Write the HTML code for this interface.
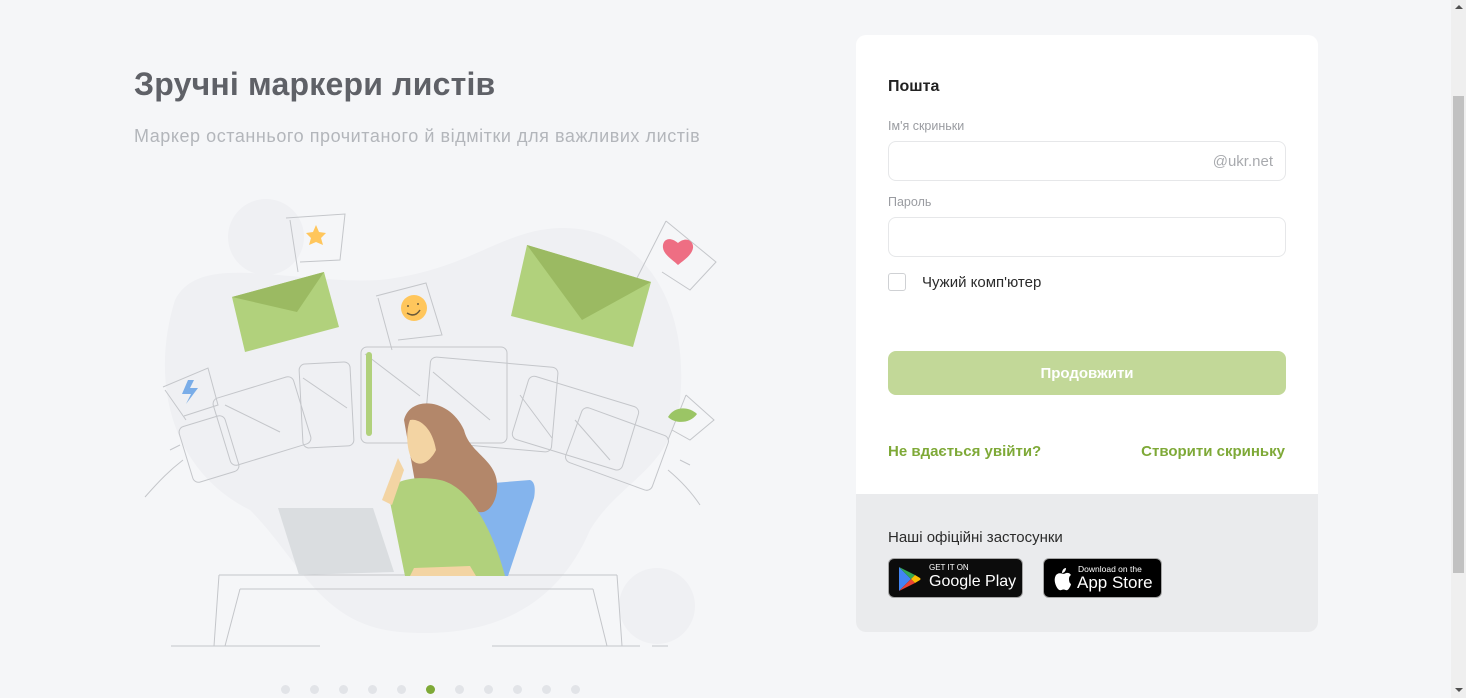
<!DOCTYPE html>
<html><head><meta charset="utf-8"><style>
*{margin:0;padding:0;box-sizing:border-box}
html,body{width:1466px;height:698px;overflow:hidden;background:#f5f6f8;font-family:"Liberation Sans",sans-serif}
.abs{position:absolute}
h1{position:absolute;left:134px;top:66px;font-size:32px;font-weight:bold;color:#5f6167;white-space:nowrap;letter-spacing:0.2px}
.sub{position:absolute;left:134px;top:126px;font-size:18px;color:#b3b6bb;white-space:nowrap;letter-spacing:0.55px}
.card{position:absolute;left:856px;top:35px;width:462px;height:597px;border-radius:10px;background:#fff;overflow:hidden}
.bottom{position:absolute;left:0;top:459px;width:462px;height:138px;background:#eaebed}
.lbl{position:absolute;left:32px;font-size:12.5px;color:#9a9ca1}
.inp{position:absolute;left:32px;width:398px;height:40px;border:1px solid #e6e7e9;border-radius:8px}
.btn{position:absolute;left:32px;top:316px;width:398px;height:44px;border-radius:8px;background:#c2d898;color:#fff;font-weight:bold;font-size:15px;text-align:center;line-height:46px}
.lnk{position:absolute;top:408px;font-size:15px;font-weight:bold;color:#7ea937}
.badge{position:absolute;top:523px;height:40px;background:#0c0c0c;border:1px solid #a6a6a6;border-radius:6px;color:#fff}
.sb{position:absolute;left:1451px;top:0;width:15px;height:698px;background:#efefef}
.dot{position:absolute;top:685px;width:9px;height:9px;border-radius:50%;background:#e2e4e8}
</style></head><body>
<h1>Зручні маркери листів</h1>
<div class="sub">Маркер останнього прочитаного й відмітки для важливих листів</div>

<svg class="abs" style="left:0;top:0" width="850" height="698" viewBox="0 0 850 698">
 <g fill="#eff0f3">
  <path d="M175 300 C200 250 290 285 380 280 C470 270 500 230 560 228 C640 226 690 300 680 400 C672 470 620 480 590 530 C560 600 500 640 400 632 C320 625 300 560 250 510 C170 470 150 380 175 300Z"/>
  <circle cx="266" cy="237" r="38"/>
  <circle cx="657" cy="606" r="38"/>
 </g>
 <g fill="none" stroke="#c4c6ca" stroke-width="1">
  <rect x="301" y="363" width="51" height="84" rx="6" transform="rotate(-3 326 405)"/>
  <rect x="361" y="347" width="146" height="96" rx="6"/>
  <rect x="427" y="362" width="128" height="85" rx="6" transform="rotate(5 491 404)"/>
  <rect x="220" y="386" width="84" height="70" rx="6" transform="rotate(-17 262 421)"/>
  <rect x="185" y="420" width="48" height="58" rx="6" transform="rotate(-17 209 449)"/>
  <rect x="518" y="390" width="115" height="66" rx="6" transform="rotate(17 575 423)"/>
  <rect x="571" y="420" width="92" height="58" rx="6" transform="rotate(20 617 449)"/>
  <path d="M303 378 L347 408 M365 354 L420 396 M433 372 L490 420 M520 395 L552 438 M225 405 L280 432 M575 420 L610 460 M112 0"/>
  <path d="M145 497 C160 480 170 470 183 460 M700 505 C690 490 680 480 668 470 M170 450 L180 445 M680 460 L690 465"/>
  <path d="M286 218 L345 214 L340 260 L300 262 M290 220 L298 272 M376 296 L426 283 L442 335 L398 340 M378 298 L392 350 M163 387 L208 368 L218 405 L184 416 M165 390 L186 420 M666 221 L716 262 L690 290 L662 272 M666 221 L637 278 M686 395 L714 420 L690 440 L672 430 M686 395 L668 440"/>
  <path d="M219 575 L617 575 M219 575 L214 646 M240 589 L593 589 M240 589 L225 646 M593 589 L607 646 M617 575 L622 646 M171 646 L320 646 M492 646 L640 646 M652 646 L668 646"/>
 </g>
 <rect x="366" y="352" width="6" height="84" rx="3" fill="#b1d17c"/>
 <path d="M316 225 l3 7 l7 1 l-5 5 l2 7 l-7 -3 l-7 3 l2 -7 l-5 -5 l7 -1z" fill="#ffc65c"/>
 <circle cx="414" cy="308" r="13" fill="#ffc65c"/>
 <path d="M408 305 v2 M418 303 v2 M407 313 q8 5 13 -3" stroke="#6b5a3a" stroke-width="1.5" fill="none"/>
 <path d="M678 243 c-10 -8 -16 -2 -15 5 c1 7 10 12 15 17 c6 -5 14 -10 15 -17 c1 -7 -7 -12 -15 -5z" fill="#ee6e83"/>
 <path d="M188 380 L182 394 L191 394 L186 404 L198 388 L190 388 L194 380Z" fill="#7aade8"/>
 <path d="M668 417 C675 405 690 407 697 414 C690 424 675 424 668 417Z" fill="#9bc565"/>
 <g>
  <path d="M232 297 L324 272 L339 327 L245 352 Z" fill="#b1d17c"/>
  <path d="M232 297 L324 272 L297 312 Z" fill="#9bba62"/>
  <path d="M527 245 L651 282 L633 347 L511 316 Z" fill="#b1d17c"/>
  <path d="M527 245 L651 282 L582 320 Z" fill="#9bba62"/>
 </g>
 <path d="M481 484 L530 480 C536 482 535 492 534 498 L508 576 L460 576Z" fill="#84b4ed"/>
 <path d="M278 508 L373 508 L394 572 L299 575 Z" fill="#dadde0"/>
 <path d="M404 420 C410 395 450 398 464 430 C470 455 500 460 497 490 C495 510 480 520 470 505 L420 510 Z" fill="#b3876a"/>
 <path d="M410 420 C418 418 432 426 436 450 C430 462 420 468 412 460 C406 448 406 430 410 420Z" fill="#f3d4a3"/>
 <path d="M388 492 C395 478 420 476 440 480 C465 485 490 520 505 576 L405 576 Z" fill="#b1d17c"/>
 <path d="M382 500 L398 458 L404 470 L392 505 Z" fill="#f3d4a3"/>
 <path d="M414 568 L470 566 L476 576 L410 576Z" fill="#f3d4a3"/>
</svg>
<div class="dot" style="left:281px"></div><div class="dot" style="left:310px"></div><div class="dot" style="left:339px"></div><div class="dot" style="left:368px"></div><div class="dot" style="left:397px"></div><div class="dot" style="left:426px;background:#7ea937"></div><div class="dot" style="left:455px"></div><div class="dot" style="left:484px"></div><div class="dot" style="left:513px"></div><div class="dot" style="left:542px"></div><div class="dot" style="left:571px"></div>

<div class="card">
 <div class="abs" style="left:32px;top:43px;font-size:16px;font-weight:bold;color:#222">Пошта</div>
 <div class="lbl" style="top:84px">Ім'я скриньки</div>
 <div class="inp" style="top:106px"><span class="abs" style="right:12px;top:11px;font-size:15px;color:#a8aaae">@ukr.net</span></div>
 <div class="lbl" style="top:160px">Пароль</div>
 <div class="inp" style="top:182px"></div>
 <div class="abs" style="left:32px;top:238px;width:18px;height:18px;border:1px solid #cfd1d4;border-radius:3px"></div>
 <div class="abs" style="left:66px;top:239px;font-size:15px;color:#2b2b2b">Чужий комп'ютер</div>
 <div class="btn">Продовжити</div>
 <div class="lnk" style="left:32px">Не вдається увійти?</div>
 <div class="lnk" style="right:33px">Створити скриньку</div>
 <div class="bottom">
  <div class="abs" style="left:32px;top:35px;font-size:15px;color:#2b2b2b">Наші офіційні застосунки</div>
  <div class="badge" style="left:32px;top:64px;width:135px">
   <svg class="abs" style="left:9px;top:7px" width="24" height="26" viewBox="0 0 24 26"><path d="M1 1 L13 13 L1 25Z" fill="#4285f4"/><path d="M1 1 L17 9 L13 13Z" fill="#34a853"/><path d="M1 25 L17 17 L13 13Z" fill="#ea4335"/><path d="M17 9 L22 12 Q23 13 22 14 L17 17 L13 13Z" fill="#fbbc04"/></svg>
   <div class="abs" style="left:40px;top:4px;font-size:8px">GET IT ON</div>
   <div class="abs" style="left:40px;top:14px;font-size:16px">Google Play</div>
  </div>
  <div class="badge" style="left:187px;top:64px;width:119px;background:#000">
   <svg class="abs" style="left:9px;top:8px" width="20" height="24" viewBox="0 0 20 24"><path d="M13 1 C13 4 11 6 9 6 C9 3 11 1 13 1Z M16 12 C16 9 18 8 18 8 C16 5 13 6 12 6.5 C11 7 10 7 9 6.5 C7 6 4 6 2.5 9 C0.5 13 2.5 19 5 22 C6 23 7 23.5 8.5 23 C10 22.3 11 22.3 12.5 23 C14 23.5 15 23 16 21.5 C17 20 18 18 18 17 C17 16.5 16 15 16 12Z" fill="#fff"/></svg>
   <div class="abs" style="left:34px;top:5px;font-size:8.5px">Download on the</div>
   <div class="abs" style="left:33px;top:14px;font-size:17px">App Store</div>
  </div>
 </div>
</div>

<div class="sb"><div class="abs" style="left:2px;top:96px;width:11px;height:477px;background:#c1c1c1"></div>
<div class="abs" style="left:4px;top:5px;width:0;height:0;border-left:4px solid transparent;border-right:4px solid transparent;border-bottom:4px solid #505050"></div>
<div class="abs" style="left:4px;top:688px;width:0;height:0;border-left:4px solid transparent;border-right:4px solid transparent;border-top:4px solid #505050"></div></div>
</body></html>
